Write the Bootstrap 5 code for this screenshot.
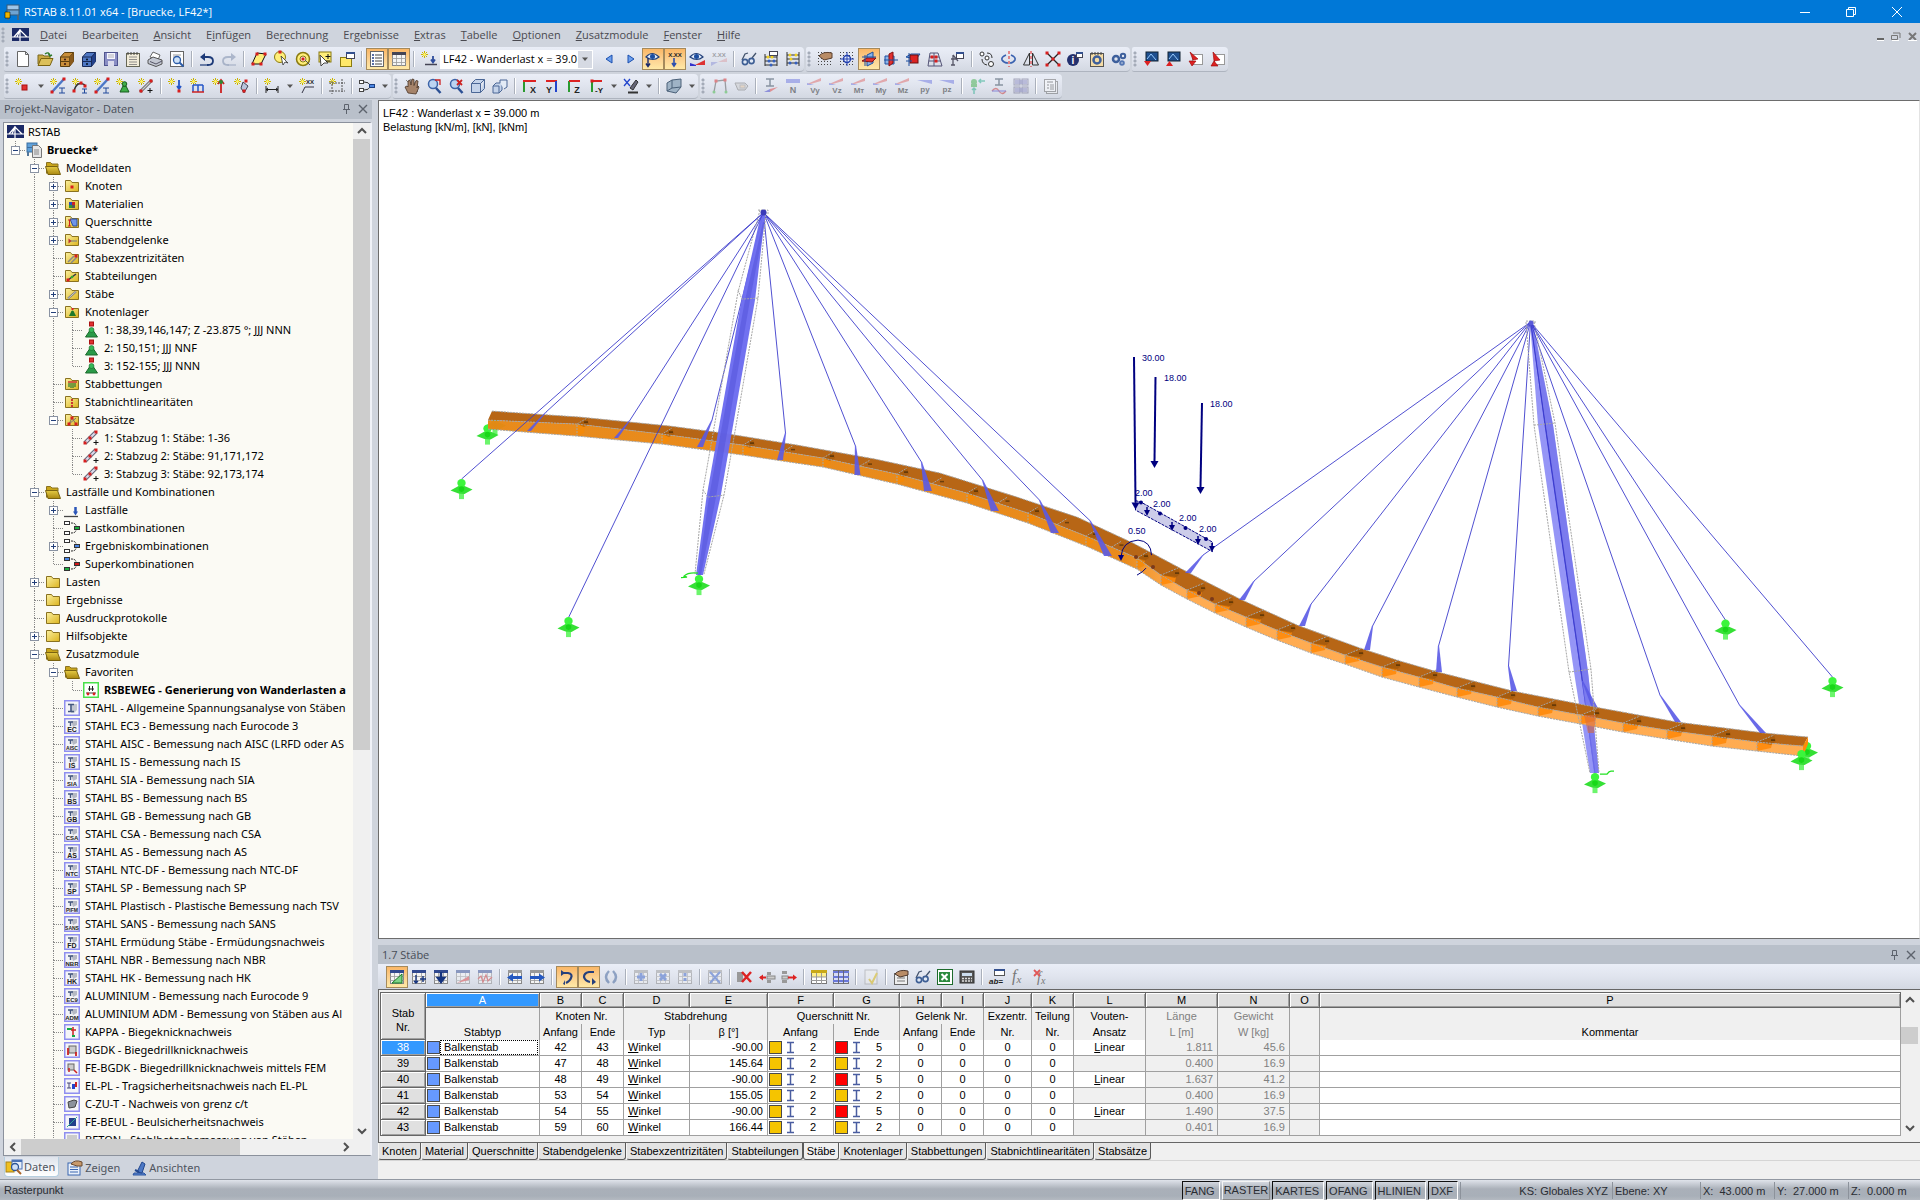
<!DOCTYPE html>
<html lang="de">
<head>
<meta charset="utf-8">
<meta name="viewport" content="width=device-width, initial-scale=1">
<title>RSTAB 8.11.01 x64 - [Bruecke, LF42*]</title>
<link href="https://cdn.jsdelivr.net/npm/bootstrap@5.3.0/dist/css/bootstrap.min.css" rel="stylesheet">
<style>
:root{--ui:"Open Sans","Noto Sans",sans-serif;--nav:"Noto Sans","Open Sans",sans-serif;--grid:"Liberation Sans",Arial,sans-serif;--chrome:#cfd4dd;--head:#b9c0ca}
body{font-family:var(--ui);font-size:11px;line-height:16px;color:#000;background:var(--chrome)}
button,select{font:inherit;color:inherit}
button{border:0;background:none;padding:0}
a{color:inherit;text-decoration:none}
.icn{display:block;width:16px;height:16px;flex:none;overflow:visible}
.title-row{height:23px;background:#0078d7;color:#fff}
.win-btn{width:46px;height:23px;display:flex;align-items:center;justify-content:center}
.menu-row{height:24px;color:#4a4a50}
.menu-row .menu-list{gap:15px}
.mdi-btn{width:16px;height:16px}
.tool-row{height:26px;gap:2px}
.tool-row + .tool-row{margin-top:1px}
.tool-group{height:25px;display:flex;align-items:center;background:linear-gradient(#eaeef7,#e0e4ee 50%,#d3d8e2);border-bottom:1px solid #aeb4bf;border-radius:2px 4px 4px 2px}
.tool-grip{width:8px;height:16px;background:radial-gradient(circle at 3px 2px,#a4abb8 1px,transparent 2px) 0 0/8px 4px}
.tool-sep{width:8px;height:16px;background:linear-gradient(90deg,transparent 3px,#aab0bb 3px,#aab0bb 4px,#fff 4px,#fff 5px,transparent 5px)}
.tool-btn{width:22px;height:22px;display:flex;align-items:center;justify-content:center;border:1px solid transparent}
.tool-btn.active{background:linear-gradient(#fbb765,#fcd08f 50%,#ffe9a6);border-color:#a58a5c}
.tool-btn.wash{opacity:.5}
.tool-caret{width:13px;height:22px;display:flex;align-items:center;justify-content:center}
.case-pick{width:153px;height:19px;margin-right:5px;border:0;background:#fff;padding:0 0 0 3px;font-size:11px;border-radius:0;appearance:none}
.case-box{position:relative}
.case-box .case-arrow{position:absolute;right:6px;top:1px;width:14px;height:17px;background:#d6dae3;pointer-events:none;display:flex;align-items:center;justify-content:center}
.work-area{gap:6px;min-height:0}
.nav-side{width:372px}
.pane-head{height:19px;background:var(--head);color:#474d57;padding:0 1px 0 4px}
.pane-icn{width:16px;height:16px;display:flex;align-items:center;justify-content:center}
.tree-frame{margin:3px 0 0 3px;border:1px solid #8b919c;border-right:2px solid #f0f2f8;min-height:0;background:#fbfaf4}
.tree-box{overflow:hidden;min-width:0;margin:0;padding:0 0 0 2px;list-style:none;font-family:var(--nav)}
.tree-row{display:flex;align-items:center;height:18px;white-space:nowrap}
.tree-cell{width:19px;height:18px;flex:none;position:relative}
.tree-cell .icn{position:absolute;inset:0;width:19px;height:18px}
.tree-icn{margin:0 5px 0 1px}
.vbar{width:17px;background:#f0f0f0;flex:none;display:flex;flex-direction:column;align-items:center}
.vbar .bar-end,.hbar .bar-end{width:17px;height:16px;display:flex;align-items:center;justify-content:center;flex:none}
.bar-thumb{background:#cdcdcd}
.hbar{height:17px;background:#f0f0f0;display:flex}
.side-tabs{height:23px;color:#50555f;gap:7px;padding:1px 0 0 4px;font-family:var(--nav)}
.side-tab{height:20px;gap:2px;padding:1px 3px 0 1px}
.side-tab.active{background:linear-gradient(#dfe4ec,#fff);border:1px solid #b6cfe0;border-top:0;border-radius:0 0 4px 4px}
.view-pane{background:#fff;border:1px solid #6d6d6d;border-right-color:#e3e3e3;min-height:0;position:relative}
.view-pane svg.scene{display:block;width:100%;height:100%}
.view-note{position:absolute;left:4px;top:5px;font:11px/14px var(--grid)}
.scene text{font:9px "Liberation Sans",sans-serif;fill:#000080}
.dock{margin-top:6px}
.dock .tool-group{border-radius:0;border:0;padding-left:8px}
.grid-frame{border:1px solid #666;border-right:0;background:#f0f0f0;padding:2px 2px 6px 1px}
.grid-tbl{table-layout:fixed;border-collapse:separate;border-spacing:0;width:100%;font:11px/15px var(--grid);border-top:1px solid #666;border-left:1px solid #666}
.grid-tbl th,.grid-tbl td{height:16px;padding:0 4px;border:0 solid #a0a0a0;border-width:0 1px 1px 0;white-space:nowrap;overflow:hidden;font-weight:400;text-align:center}
.grid-tbl td{background:#fff}
.grid-tbl thead th{background:#f0f0f0;padding:0 0 1px;border-bottom:0;line-height:14px}
.grid-tbl thead tr:last-child th{border-bottom-width:1px}
.grid-tbl thead th.ltr,.grid-tbl th.rowno,.grid-tbl thead th.corner{background:#e0e0e0;border:0 solid #666;border-width:0 1px 1px 0;box-shadow:inset 1px 1px #fff,inset -1px -1px #a0a0a0;height:15px;line-height:13px;padding:0}
.grid-tbl thead th.corner{line-height:14px;padding-top:8px}
.grid-tbl th.rowno{height:16px}
.grid-tbl thead th.ltr.cur,.grid-tbl th.rowno.cur{background:#3399ff;color:#fff}
.grid-tbl td.calc,.grid-tbl th.calc{background:#f0f0f0;color:#808080}
.grid-tbl td.num{text-align:right}
.grid-tbl td.txt{text-align:left}
.grid-tbl td.swc{padding:0 1px}
.swatch{width:13px;height:13px;border:1px solid #4a4a4a;flex:none}
.focus-cell{border:1px dotted #000;height:15px;line-height:13px;flex:1 1 auto;padding-left:3px}
.bal{height:15px;padding-left:4px}
.dock-tabs{height:18px;background:#f0f0f0;border-bottom:1px solid #d5d5d5}
.dock-tab{height:17px;padding:0 3px;background:#e3e3e3;border:1px solid #5a5a5a;border-top:0;border-left-color:#f5f5f5;border-radius:0 0 3px 3px;font:11px/15px var(--grid)}
.dock-tab.active{background:#f0f0f0;border-left-color:#5a5a5a}
.dock-foot{height:18px;background:#f0f0f0}
.status-row{height:21px;background:linear-gradient(#dfe3ea,#aab0b9 45%,#a8afb8 80%,#b4b9c1);border-top:1px solid #9298a2;font:11px/18px var(--grid);color:#2a2d33}
.snap-btn{height:19px;padding:0 4px 0 2px;margin-right:2px;border:1px solid #111;border-right-color:#fff;border-bottom-color:#fff}
.snap-btn.up{border-color:#f4f4f4 #888 #888 #f4f4f4;line-height:15px;padding:0 1px}
.stat-cell{border-left:1px solid #8c929b;height:17px;padding-left:2px;white-space:pre}
</style>
</head>
<body>
<div class="vh-100 d-flex flex-column overflow-hidden">
  <header>
    <div class="title-row d-flex align-items-center ps-1">
      <span data-icn="app"></span><span class="ms-1 flex-grow-1">RSTAB 8.11.01 x64 - [Bruecke, LF42*]</span>
      <button class="win-btn" aria-label="Minimieren"><svg width="10" height="10"><path d="M0 5.5h10" stroke="#fff"/></svg></button>
      <button class="win-btn" aria-label="Wiederherstellen"><svg width="10" height="10" fill="none" stroke="#fff"><path d="M.5 2.5h7v7h-7zM2.500 2.500v-2h7v7h-2"/></svg></button>
      <button class="win-btn" aria-label="Schließen"><svg width="10" height="10"><path d="M0 0l10 10M10 0L0 10" stroke="#fff"/></svg></button>
    </div>
    <nav class="menu-row d-flex align-items-center" aria-label="Hauptmenü">
      <span class="tool-grip"></span><span data-icn="logo" class="ms-1 me-2"></span>
      <div class="menu-list d-flex flex-grow-1 ps-1">
        <a href="#"><u>D</u>atei</a><a href="#">Bearbeite<u>n</u></a><a href="#"><u>A</u>nsicht</a><a href="#">E<u>i</u>nfügen</a><a href="#">Be<u>r</u>echnung</a><a href="#">Er<u>g</u>ebnisse</a><a href="#"><u>E</u>xtras</a><a href="#"><u>T</u>abelle</a><a href="#"><u>O</u>ptionen</a><a href="#"><u>Z</u>usatzmodule</a><a href="#"><u>F</u>enster</a><a href="#"><u>H</u>ilfe</a>
      </div>
      <button class="mdi-btn" aria-label="Fenster minimieren"><svg width="9" height="9"><path d="M1 7h7" stroke="#666" stroke-width="2"/><path d="M1 8.500h7" stroke="#fff"/></svg></button>
      <button class="mdi-btn" aria-label="Fenster wiederherstellen"><svg width="10" height="9" fill="none" stroke="#777"><path d="M.5 3.500h6v4h-6zM2 1h7v5" /><path d="M1 8.500h7" stroke="#fff"/></svg></button>
      <button class="mdi-btn" aria-label="Fenster schließen"><svg width="9" height="9"><path d="M1 1l7 7M8 1L1 8" stroke="#777" stroke-width="2"/><path d="M0 8.500h9" stroke="#fff"/></svg></button>
    </nav>
    <div class="tool-row d-flex ps-1" id="bar1"></div>
    <div class="tool-row d-flex ps-1" id="bar2"></div>
  </header>

  <main class="work-area d-flex flex-grow-1">
    <aside class="nav-side d-flex flex-column flex-shrink-0">
      <div class="pane-head d-flex align-items-center">
        <span class="flex-grow-1">Projekt-Navigator - Daten</span>
        <button class="pane-icn" data-icn="pin" aria-label="Anheften"></button><button class="pane-icn" data-icn="close" aria-label="Navigator schließen"></button>
      </div>
      <div class="tree-frame d-flex flex-column flex-grow-1">
        <div class="d-flex flex-grow-1 overflow-hidden">
          <ul class="tree-box flex-grow-1" id="tree"></ul>
          <div class="vbar">
            <span class="bar-end" data-icn="up"></span>
            <span class="bar-thumb w-100" style="flex:609 0 0"></span><span style="flex:371 0 0"></span>
            <span class="bar-end" data-icn="down"></span>
          </div>
        </div>
        <div class="hbar pe-3">
          <span class="bar-end" data-icn="left"></span>
          <span class="bar-thumb" style="flex:218 0 0"></span><span style="flex:96 0 0"></span>
          <span class="bar-end" data-icn="right"></span>
        </div>
      </div>
      <div class="side-tabs d-flex">
        <button class="side-tab active d-flex align-items-center"><span data-icn="tabdata"></span>Daten</button>
        <button class="side-tab d-flex align-items-center"><span data-icn="tabshow"></span>Zeigen</button>
        <button class="side-tab d-flex align-items-center"><span data-icn="tabview"></span>Ansichten</button>
      </div>
    </aside>

    <section class="d-flex flex-column flex-grow-1 overflow-hidden">
      <div class="view-pane flex-grow-1">
        <svg class="scene" id="scene" viewBox="379 101 1540 837" preserveAspectRatio="xMidYMid meet"></svg>
        <div class="view-note">LF42 : Wanderlast x = 39.000 m<br>Belastung [kN/m], [kN], [kNm]</div>
      </div>
      <div class="dock">
        <div class="pane-head d-flex align-items-center">
          <span class="flex-grow-1">1.7 Stäbe</span>
          <button class="pane-icn" data-icn="pin" aria-label="Tabelle anheften"></button><button class="pane-icn" data-icn="close" aria-label="Tabelle schließen"></button>
        </div>
        <div id="bar3"></div>
        <div class="grid-frame d-flex">
          <table class="grid-tbl flex-grow-1">
            <colgroup id="gridcols"></colgroup>
            <thead>
              <tr id="letters"></tr>
              <tr><th></th><th colspan="2">Knoten Nr.</th><th colspan="2">Stabdrehung</th><th colspan="2">Querschnitt Nr.</th><th colspan="2">Gelenk Nr.</th><th>Exzentr.</th><th>Teilung</th><th>Vouten-</th><th class="calc">Länge</th><th class="calc">Gewicht</th><th></th><th></th></tr>
              <tr><th>Stabtyp</th><th>Anfang</th><th>Ende</th><th>Typ</th><th>β [°]</th><th>Anfang</th><th>Ende</th><th>Anfang</th><th>Ende</th><th>Nr.</th><th>Nr.</th><th>Ansatz</th><th class="calc">L [m]</th><th class="calc">W [kg]</th><th></th><th>Kommentar</th></tr>
            </thead>
            <tbody id="rows"></tbody>
          </table>
          <div class="vbar">
            <span class="bar-end" data-icn="up"></span><span style="flex:18 0 0"></span>
            <span class="bar-thumb w-100" style="flex:17 0 0"></span><span style="flex:74 0 0"></span>
            <span class="bar-end" data-icn="down"></span>
          </div>
        </div>
        <div class="dock-tabs d-flex">
          <button class="dock-tab">Knoten</button><button class="dock-tab">Material</button><button class="dock-tab">Querschnitte</button><button class="dock-tab">Stabendgelenke</button><button class="dock-tab">Stabexzentrizitäten</button><button class="dock-tab">Stabteilungen</button><button class="dock-tab active">Stäbe</button><button class="dock-tab">Knotenlager</button><button class="dock-tab">Stabbettungen</button><button class="dock-tab">Stabnichtlinearitäten</button><button class="dock-tab">Stabsätze</button>
        </div>
        <div class="dock-foot"></div>
      </div>
    </section>
  </main>

  <footer class="status-row d-flex align-items-center ps-1">
    <span class="flex-grow-1">Rasterpunkt</span>
    <button class="snap-btn">FANG</button><button class="snap-btn up">RASTER</button><button class="snap-btn">KARTES</button><button class="snap-btn">OFANG</button><button class="snap-btn">HLINIEN</button><button class="snap-btn">DXF</button>
    <span class="stat-cell text-end pe-1" style="width:152px">KS: Globales XYZ</span>
    <span class="stat-cell" style="width:88px">Ebene: XY</span>
    <span class="stat-cell" style="width:74px">X:  43.000 m</span>
    <span class="stat-cell" style="width:74px">Y:  27.000 m</span>
    <span class="stat-cell" style="width:72px">Z:  0.000 m</span>
  </footer>
</div>

<script src="https://cdn.jsdelivr.net/npm/bootstrap@5.3.0/dist/js/bootstrap.bundle.min.js"></script>
<script>
/* ---------- small drawing helpers ---------- */
const R=(x,y,w,h,f='none',s='none')=>`<rect x="${x}" y="${y}" width="${w}" height="${h}" fill="${f}" stroke="${s}"/>`;
const P=(d,s='#222',w=1,f='none',x='')=>`<path d="${d}" stroke="${s}" stroke-width="${w}" fill="${f}" ${x}/>`;
const C=(x,y,r,f='none',s='none',w=1)=>`<circle cx="${x}" cy="${y}" r="${r}" fill="${f}" stroke="${s}" stroke-width="${w}"/>`;
const T=(x,y,t,z=7,f='#222',x2='')=>`<text x="${x}" y="${y}" font-size="${z}" fill="${f}" font-family="Liberation Sans" font-weight="bold" text-anchor="middle" ${x2}>${t}</text>`;
const star=P('M3.500 0v7M0 3.500h7M1 1l5 5M6 1l-5 5','#c9b400',1)+C(3.5,3.5,1.5,'#fff36b');
const node=(x,y)=>R(x-1.5,y-1.5,3,3,'#d81e1e');
const page=R(1.5,.5,13,15,'#fdfdfd','#666');
const lens=C(7,6,4.5,'#bcd4f2','#3c63a8',1.5)+P('M10 10l4.500 5','#2b4f94',2.5);
const dots=(()=>{let o='';for(let y=1;y<16;y+=3)for(let x=1;x<16;x+=3)o+=R(x,y,1,1,'#444');return o})();
const eye=P('M1 6q6-7 13 0q-6 5-13 0z','#23407a',1.2,'#dfeafa')+C(7.5,5.500,2.500,'#1c4da0');
const glasses=P('M1 9L4 3l3-1M11 7l4-5','#44546e',1.3)+C(4,11,2.6,'#dfe8f5','#3d5e94',1.6)+C(10.500,10,2.6,'#dfe8f5','#3d5e94',1.6);
const tbl=(c='#31498f')=>R(1.5,1.5,13,13,'#f4f4f4','#888')+R(1,1,14,3,c)+P('M5.500 4v11M10.500 4v11M1 7.500h14M1 11.500h14','#999',.8);
const cube=(f='#c4d3ea')=>P('M1.500 5.500h9v9h-9zM1.500 5.500l4-4h9l-4 4M14.500 1.500v9l-4 4','#4b6796',1,f);
const folderC=(g='')=>P('M1.500 13.500v-11h5l1.500 2h6.500v9z','#8a7220',1,'url(#gy)')+g;
const folderO=P('M1.500 13.500v-11h4l1.500 1.500h6v3','#8a7220',1,'#c9a51a')+P('M3 14.500L.5 6.500h12l3 8z','#7a6310',1,'url(#gy2)');
const I={
app:R(3,1,12,5,'#9fc6e8','#3a5b78')+R(3,6,12,5,'#6fa4d2','#3a5b78')+P('M4 11v5M14 11v5','#49697f',2)+P('M1 8h5v6h-5z','#000',.5,'#f0b400'),
logo:R(0,1,17,13,'#1c2a66')+P('M0 10h17M5 10L8 3l7 7M8 2v12M8 3L2 10','#fff',1.2),
pin:P('M5.500 3.500h4v5h-4zM4 8.500h7M7.500 9v4','#5d636d',1),
close:P('M4 4l8 8M12 4l-8 8','#5d636d',1.4),
up:P('M4 10l4-4 4 4','#505050',2),down:P('M4 6l4 4 4-4','#505050',2),left:P('M10 4L6 8l4 4','#505050',2),right:P('M6 4l4 4-4 4','#505050',2),
tabdata:R(0,3,8,10,'#f0c020','#a5811a')+R(6,1,10,9,'#e6eef8','#4b73b5')+R(6,1,10,2,'#4b73b5')+C(9,8,3.5,'#cfe0f5','#2c5596',1.3)+P('M11 11l4 4','#a8642a',2),
tabshow:R(1,3,12,12,'#e9f0fa','#3a66b0')+P('M3 7h8M3 9.500h8M3 12h8','#3a66b0')+P('M4 4q4-5 11-2v4h-5z','#6b4a30',1,'#c89a6c'),
tabview:P('M3 13h10l2 2H2z','#2a54a0',1,'#5c86cf')+P('M6 12L11 2l3 2-3 9z','#22478e',1,'#4d78c4')+P('M4 10l4 2','#22478e',2),
new:P('M2.500.5h8l3 3v12h-11zM10.500.5v3h3','#666',1,'#fff'),
open:P('M1 13V4h5l1 1h6v3','#7a6820',1,'#c9a842')+P('M1 14.500l3-7h12l-3 7z','#7a6310',1,'#dcc05a')+P('M8 3q4-3 5 2l2-1M13 5l-1.500-2','#2c7a2c',1.4),
cab1:P('M1.500 6l4-4.500h9v9l-4 5h-9z','#5a3e10',1,'#c98e3a')+P('M1.500 6h9v9.500M10.500 6l4-4.500M1.500 10.500h9','#5a3e10')+P('M10.500 6l4-4.500v9l-4 5z','none',0,'#8a5a1c')+C(6,8.500,1,'#311')+C(6,13,1,'#311'),
cab2:P('M1.500 6l4-4.500h9v9l-4 5h-9z','#182a58',1,'#4f78c4')+P('M10.500 6l4-4.500v9l-4 5z','none',0,'#23408a')+P('M1.500 6h9v9.500M10.500 6l4-4.500M1.500 10.500h9','#182a58')+C(6,8.500,1,'#012')+C(6,13,1,'#012'),
save:R(1.500,1.500,13,13,'#8a8ec4','#50548f')+R(4,2,8,6,'#f5f5ff')+R(5,10,6,5,'#dcdcec')+P('M5 4h6M5 6h6','#999',.7),
clip:R(1.500,2.500,13,13,'#f2ecd9','#665')+P('M4 6h8M4 8.500h8M4 11h8M4 13.500h8','#777',.8)+P('M3 1v3M6 1v3M9 1v3M12 1v3','#444'),
print:P('M3 6L6 1l7 3-2 5z','#666',1,'#fff')+P('M1 9l5-3 9 3v4l-6 2.500-8-3z','#555',1,'#c3c7d2')+P('M3 10.500l6 2.500 6-3','#556'),
prev:page+P('M4 4h8M4 6h6','#999')+C(8,9,3.500,'#cfe2f7','#2c5ca8',1.3)+P('M10.500 11.500l4 4','#2c5ca8',2),
undo:P('M3 6h6q5 0 5 4t-5 4H8','#1d3a78',1.8)+P('M1 6l5-4v8z','none',0,'#1d3a78')+P('M1 14h7','#1d3a78',1.2),
redo:P('M13 6H7q-5 0-5 4t5 4h1','#7788a8',1.8)+P('M15 6l-5-4v8z','none',0,'#7788a8')+P('M8 14h7','#7788a8',1.2),
selpoly:P('M1 13L6 2l9 1-5 10z','#111',1,'#ffef7a')+node(2,13)+node(6,3)+node(14,3)+node(10,13),
sel1:C(7,6,5.500,'#ffef7a','#8a7a10')+P('M8 5l2 9 2-3 3 1z','#333',.8,'#fff')+node(7,1),
sel2:C(8,8,6.5,'#ffef7a','#8a7a10',1.5)+C(8,8,3,'#fff','#8a7a10')+node(8,8)+P('M10 9l5 5','#555'),
sel3:R(2,1,12,10,'#ffef7a','#8a7a10')+P('M3 4l8 8h-4l-3 3z','#444',1,'#fff')+P('M11 3v5M8.500 5.500h5M9 10h4','#111'),
sel4:R(1.500,6.500,11,9,'#ffe96a','#8a7a10')+R(7.500,1.500,8,6,'#fff','#445')+R(7,1,9,2,'#33508f'),
nav:page+P('M3 4h2M3 7h2M3 10h2M3 13h2','#223f8a',1.6)+P('M6 4h7M6 7h7M6 10h7M6 13h7','#444'),
tab:tbl('#445'),
loadnew:star+P('M12 5v6M10 8.500l2 3 2-3','#2d4c9c',1.8)+P('M4 13.500h12','#445',1.5),
pl:P('M11 4L5 8l6 4z','#1a4fae',1,'#6ea0ee'),pr:P('M5 4l6 4-6 4z','#1a4fae',1,'#6ea0ee'),
eyeload:eye+P('M3 7v8M1 12.500l2 3 2-3','#1b2a6b',1.4),
xload:T(8,6,'X.XX',6)+P('M7 7v8M5 12l2 3 2-3','#2c4fb0',1.6),
eyeres:eye+P('M6 14l10-5v5z','none',0,'#d33')+P('M1 12l6 2v1H1z','none',0,'#33c'),
xres:T(8,6,'X.XX',6,'#555')+P('M7 11l9-4v4z','none',0,'#dba0a6')+P('M0 11h7l-7 4z','none',0,'#8c92d8'),
glasses,
calc:P('M2 3v12M14 3v12M2 6h12M2 10h12M2 14h12','#333')+C(5,6,1.5,'#f0d020')+C(9,6,1.5,'#f0d020')+C(6,10,1.5,'#3560c0')+C(11,10,1.5,'#3560c0')+C(8,14,1.5,'#3560c0')+R(6.500,.5,8,4,'#fff','#445'),
calc2:P('M2 1v14M14 1v14M2 4h12M2 8h12M2 12h12','#333')+C(5,4,1.5,'#f0d020')+C(11,4,1.5,'#f0d020')+C(6,8,1.5,'#f0d020')+C(11,12,1.5,'#3560c0')+C(5,12,1.5,'#3560c0'),
griddots:dots+P('M2 5q4-5 13-3v5l-8 2z','#5a4030',1,'#b98c66'),
gridsnap:dots+C(8,8,3.500,'#e8eefc','#2240b0',1.4)+P('M8 1v14M1 8h14','#2240b0'),
pln1:P('M6 4l6-3v11l-6 3z','#1c4ea0',1,'#8ab4e8')+P('M1 10l5-3h9l-4 4z','#811',1,'#e23030')+P('M4 4v11M1 6h14','#1c4ea0'),
pln2:P('M2 5h9v8H2z','#1c4ea0',1,'#8ab4e8')+P('M6 3l4-2v11l-4 3z','#811',1,'#e23030')+P('M1 9h14','#1c4ea0'),
pln3:P('M1 6l5-3h9l-4 5z','#1c4ea0',1,'#8ab4e8')+R(5,4,8,8,'#d22','#611')+P('M4 2v13M1 10h6','#1c4ea0'),
mesh:P('M3 2h8l4 13H1zM7 2v13M2 6h10M1.500 10h12','#557')+node(5,6)+node(9,10)+node(9,6),
snapset:P('M2 14h4M4 14V4M4 4l5 6M2 8h6','#556',1.3)+R(7.500,1.500,7,6,'#fff','#445')+R(7,1,8,2,'#33508f'),
copy:C(3,3,2,'#fff','#333')+C(8,7,2,'#fff','#333')+C(12,13,2.500,'#fff','#333')+P('M8 2q5 0 5 5M3 8q0 5 5 6','#333'),
rot:P('M5 4q-5 2-4 5 2 3 6 3M10 4q5 2 4 5-2 3-5 3','#3a62b0',1.6)+P('M8 0v16','#d22',1,'none','stroke-dasharray="3 2"'),
mirror:P('M6.500 2v12H.5zM9.500 2v12h6z','#333')+P('M8 0v16','#d22',1,'none','stroke-dasharray="3 2"'),
cross:P('M2 2l12 12M14 2L2 14','#222',1.3)+node(2,2)+node(14,2)+node(2,14)+node(14,14)+node(8,8),
info:C(6,9,6,'#23306e')+T(6,13,'i',10,'#fff')+R(9.500,1.500,6,5,'#fff','#445')+R(9,1,7,2,'#33508f'),
gearpage:R(1.500,2.500,13,13,'#f5dca6','#555')+C(8,9,3.500,'none','#3d5f9c',2.500)+P('M3 1v3M6 1v3M9 1v3M12 1v3','#444'),
gears:C(5,8,3,'none','#3d5f9c',2.500)+C(12,5,2.200,'none','#3d5f9c',2)+C(11,12,1.800,'none','#5577b4',2),
mod1:R(3,1,12,9,'#1e4f8f','#123')+P('M4 8l4-5 5 6','#9cf')+P('M1 10h7l-3.500 5z','none',0,'#d22'),
mod2:R(3,1,12,9,'#1e4f8f','#123')+P('M4 8l4-5 5 6','#9cf')+P('M1 15h7l-3.500-5z','none',0,'#d22'),
mod3:R(5.500,3.500,10,10,'#fff','#999')+P('M3 1l8 7-5 1zM2 10h7l-4 5z','#900',.6,'#d22'),
mod4:R(5.500,3.500,10,10,'#fff','#999')+P('M4 1l7 8-6 1zM2 15h7l-4-5z','#900',.6,'#d22'),
nnode:star+R(7,7,5,5,'#e03030','#a11'),
nmem:star+P('M2 14L14 1','#4c78c8',2.500)+node(2,14)+node(14,1)+P('M9 10h6M12 10v5M9 15h6','#224a9c'),
nset:star+P('M2 13Q5 2 13 7','#333',1.5)+node(2,13)+node(9,5)+node(13,8)+P('M10 11h5M12.500 11v4M10 15h5','#224a9c'),
nsup:star+P('M4 14l3-6h3l3 6z','#175c1e',1,'#3fae49')+C(8.500,6,2.300,'#3fae49','#175c1e'),
ndiv:star+P('M2 14L14 2','#555',3)+P('M2 14L14 2','#ccc',1.500)+node(3,13)+node(13,3)+P('M12 10v5M9.500 12.500h5','#111'),
nld1:star+P('M11 2v8M9 8l2 3 2-3','#2456c8',1.800)+node(11,13),
nld2:star+P('M3 7v7M8 7v7M13 7v7M3 7h10','#2456c8',1.5)+P('M2 14h12','#c22',1.500),
nld3:star+P('M9 3v12M6 6l3-4 3 4','#c22',1.800)+C(9,4,2,'#2c8c36'),
nld4:star+P('M9 4l5 4-4 7-3-5z','#445',1,'#b9c4dc')+node(12,3)+node(10,13),
dim:star+P('M2 8v7M14 8v7M2 11.500h12M4 10l-2 1.500 2 1.500M12 10l2 1.500-2 1.500','#222'),
xx:star+T(11,6,'XX',6)+P('M3 15l3-6h9','#334'),
grd:star+P('M3 3v13M13 1v13M0 5h16M0 13h16','#555',1,'none','stroke-dasharray="2 1"'),
comb:R(.5,2.500,4,3,'#fff','#444')+R(.5,10.500,4,3,'#fff','#444')+P('M5 4q5 0 6 3M5 12q5 0 6-3','#333')+R(10.500,6.500,5,3,'#4a86e4','#1c3f80'),
hand:P('M2 2l12 12M6 1l9 8','#888',1)+P('M4 15l-3-6 2-1 1 1V3l2-1 1 5 1-6 2 .5 0 6 2-5 2 .5-1 7 1-2 1 1-3 7z','#4a3526',.8,'#a5836a'),
zoom1:lens+P('M9 2h5v5','#c22',1.300),zoom2:lens+P('M9 2l5 5M14 2L9 7','#c22',1.800),
cube:cube(),box:P('M1 8h6v7H1zM1 8l3-3h6v7l-3 3','#4b6796',1,'#c4d3ea')+P('M8 5V2h7v7l-3 2','#4b6796',1,'#e3ebf6'),
ax:T(11,15,'X',9)+P('M2 3v11','#2a9a30',2)+P('M1 3h13','#d22',2),ay:T(5,15,'Y',9)+P('M2 3h11','#d22',2)+P('M12 3v11','#24c',2),az:T(11,15,'Z',9)+P('M3 3v11','#2a9a30',2)+P('M3 3h11','#d22',2),amy:T(11,15,'-Y',8)+P('M4 3v11','#2a9a30',2)+P('M4 3h10','#d22',2)+node(4,3),
scope:P('M1 1l6 7M7 1L1 8','#24c',1.300)+P('M5 14.500h10','#333',2)+P('M7 10L13 2l2 2-5 8z','#333',1,'#667'),
solid:P('M1 5l5-3 9-1v8l-5 6-9-2z','#4a6078',1,'#9fb3c6')+P('M6 2v8l9-1M6 10l-5 3','#4a6078'),
frame:P('M3 14L5 3l9-1 1 11','#555',1.300)+node(5,3)+node(14,2)+C(3,14,1.500,'#4b4')+C(15,14,1.5,'#4b4'),
roll:P('M2 5h10l3 3-3 4H5z','#777',1,'#ccc')+R(7,7,5,3,'#e8c8a0','#999'),
bI:P('M3 1h8M7 1v7M3 8h8','#345',1.500)+P('M1 14l6-3v3z','none',0,'#44c')+P('M7 11l8-2-8 5z','none',0,'#d44'),
bN:R(1,1,14,4,'#6d76e0')+T(8,15,'N',9),
bVy:wedgeUp('Vy'),bVz:wedgeUp('Vz'),bMT:wedgeUp('Mт'),bMy:wedgeUp('My'),bMz:wedgeUp('Mz'),bpy:P('M0 2h15v4z','none',0,'#6d76e0')+T(8,14,'py',8),bpz:P('M0 2h15v4z','none',0,'#6d76e0')+T(8,14,'pz',8),
tree3:C(5,4,3,'#3fae49')+R(2,6,6,3,'#3fae49')+P('M10 3h6M12 1l-2 2 2 2M5 16v-5M3 12l2-2 2 2','#2a8',1.500),
isec:P('M4 1h8M8 1v6M4 7h8','#345',1.500)+P('M1 13q4-5 7 0t7 0','#c33',1.300)+P('M1 13h14','#33c'),
tbl4:R(1,1,6,6,'#ccd','#668')+R(9,1,6,6,'#ccd','#668')+R(1,9,6,6,'#ccd','#668')+R(9,9,6,6,'#ccd','#668')+P('M2 3h12M2 5h12M2 11h12M2 13h12','#55a'),
rep:R(3.500,3.500,11,12,'#f4f4f4','#666')+R(1.500,1.500,11,12,'#fff','#666')+P('M4 4h6M4 7h2M4 10h2','#444')+R(7,6,4,6,'#aaa'),
tg1:tbl()+P('M3 14L13 5v9z','#1a7a24',1,'#7fd488'),tg2:tbl()+P('M5 6v8M3 12l2 2 2-2M12 7v6M9 10h6','#15337e',1.400),tg3:tbl()+P('M8 3v8M5 9l3 4 3-4z','#15337e',2.500),
tg4:tbl()+P('M2 14l12-7v4z','none',0,'#d44'),tg5:tbl()+P('M1 10l3-3 2 6 3-7 2 6 4-4','#c33',1.200),
tp1:tbl('#999')+P('M3 8.500h12','#2458c0',3)+P('M0 8.500l6-4v8z','none',0,'#2458c0'),tp2:tbl('#999')+P('M1 8.500h12','#2458c0',3)+P('M16 8.500l-6-4v8z','none',0,'#2458c0'),
cw1:P('M3 4h6q5 1 3 5-1 3-5 5','#26407c',2.2)+P('M2 1v6l4-3zM6 11v5l-2-1z','none',0,'#26407c'),cw2:P('M13 3H8q-5 1-5 5 1 4 6 5','#26407c',2.2)+P('M11 9v7l4-3z','none',0,'#26407c'),cw3:P('M6 2q-6 6 0 12M10 14q6-6 0-12','#3d6098',2.400),
ta:tbl('#999')+P('M8 4v8M4 8h8','#3a63c8',3),tb:tbl('#999')+P('M5 5l6 6M11 5l-6 6','#3a63c8',3),tc:tbl('#999')+P('M8 4v3M8 9v3','#3a63c8',3),td:tbl('#999')+P('M3 3l10 11M13 3L3 14','#3a63c8',2),
te:R(0,3,6,10,'#999')+P('M5 3l9 10M14 3L5 13','#d22',2.500),tf:R(8,3,4,3,'#999')+R(8,11,4,3,'#999')+R(8,7,8,3,'#ccc','#888')+P('M7 8.500H1','#d22',2)+P('M0 8.500l4-3v6z','none',0,'#d22'),tgx:R(1,2,5,3,'#999')+R(1,11,5,3,'#999')+R(1,7,6,3,'#ccc','#888')+P('M7 8.500h7','#d22',2)+P('M16 8.500l-4-3v6z','none',0,'#d22'),
th:R(.5,1.500,15,13,'#fff','#777')+R(1,4,14,4,'#fff08a')+R(0,1,16,3,'#c8a818')+P('M5.500 4v11M10.500 4v11M0 8h16M0 11.500h16','#999'),ti:R(.5,1.500,15,13,'#d5dbf8','#777')+P('M0 3h16M0 8h16M0 12h16','#6a78d8',2)+P('M5.500 1v14M10.500 1v14','#667'),
tj:R(2,1,12,14,'#eee','#999')+P('M6 10l3 4L14 4','#d8b400',2),tk:R(1.500,4.500,13,11,'#eee','#666')+P('M4 9h8M4 12h8','#777')+P('M2 5q4-5 13-3v4l-8 2z','#4b352a',1,'#b98c66'),
xls:R(.5,.5,15,15,'#fff','#1d6b2c')+R(2,3,11,10,'#2b8a3e')+P('M4.500 5l6 6M10.500 5l-6 6','#fff',2),kalk:R(1,2,14,12,'#555','#333')+R(3,4,10,3,'#cde')+P('M3 9.500h10M3 12h10','#ddd',1.600,'none','stroke-dasharray="2 1"'),
ab:R(5.500,.5,10,6,'#fff','#555')+R(5,0,11,2,'#33508f')+T(7,15,'ab=',8,'#222','font-style="italic"'),
fx:`<text x="1" y="12" font-family="Liberation Serif" font-style="italic" font-size="16" fill="#777">f<tspan font-size="11" dy="2">x</tspan></text>`,
fxx:`<text x="4" y="13" font-family="Liberation Serif" font-style="italic" font-size="14" fill="#777">f<tspan font-size="10" dy="2">x</tspan></text>`+P('M1 1l6 6M7 1L1 7','#e05858',1.800),
caret:P('M5 6.500h6l-3 3.500z','none',0,'#555'),
fo:folderO,fc:folderC(),
f1:folderC(node(8,9)),f2:folderC(R(5,6,3,3,'#2a4cc0')+R(8,6,3,3,'#c22')+R(5,9,3,3,'#2a9a30')+R(8,9,3,3,'#555')),
f3:folderC(P('M6 5h7v7H9z','#2c4ea0',1,'#6f95e8')+P('M4 6h3M5.500 6v6M4 12h3','#c22')),f4:folderC(P('M5 9h8','#887',1.300)+P('M4.500 6.500l3 2.500-3 2.500z','none',0,'#b33')),
f5:folderC(P('M4 12l6-6M7 13l6-6','#888',1.500)+node(12,6)),f6:folderC(P('M4 12l8-6','#334',1.500)+C(8,9,1.300,'#3a3')+node(4,12)),f7:folderC(P('M4 12.500l8-7','#777',2)+P('M4 12.500l8-7','#ddd',.8)),
f8:folderC(P('M5 12l2-4h3l2 4z','none',0,'#1f7a2c')+C(8.500,8,1.500,'#1f7a2c')+R(7.500,4,2,2,'#d22')),f9:folderC(P('M4 6h9','#c33',1.500)+P('M5 7v4M7 7v5M9 7v5M11 7v4','#267a30',1.200)),
f10:folderC(P('M8 5v8','#c33',2,'none','stroke-dasharray="2 1"')),f11:folderC(P('M5 12l3-6 4 6','#775')+P('M4 13l8-7','#777')+node(5,12)+node(8,6)+node(12,12)),
sup:P('M2.500 15l4-6h4l4 6z','#1c6a2c',1,'#2a9a48')+C(8.500,8,2.500,'#34b858','#1c6a2c',.6)+R(6.500,0,4,4,'#e03030','#a11'),
zug:P('M2 13L13 2','#667',4)+P('M2 13L13 2','#dde',2)+node(2,13)+node(7,8)+node(13,2)+P('M13 10v5M10.500 12.500h5','#111'),
proj:R(1,1,10,9,'#5fa0d8','#3a6ea0')+P('M1 5.500h10','#3a6ea0')+P('M2 10v4M10 10v4','#579',2)+P('M6.500 3.500h6l3 3v9h-9z','#777',1,'#e6e6e6')+P('M8 8h5M8 10h5M8 12h5','#888'),
lf:P('M0 14.500h14','#444',1.300)+P('M11.500 5v6','#2a55b8',2.500)+P('M9 9.500h5l-2.500 4z','none',0,'#2a55b8'),
c1:comb3('#fff','#fff','#20b040'),c2:comb3('#fff','#fff','#4a86e4'),c3:comb3('#4a86e4','#20b040','#d01818'),
rsb:R(1,1,14,14,'#fff','#4ae04a')+R(.5,.5,15,15,'none','#4ae04a')+P('M6.500 4v5M9.500 4v5M5 7h6','#222')+P('M3 11h10','#444')+C(5,12,1.400,'#d22')+C(11,12,1.400,'#d22')
};
function wedgeUp(t){return P('M0 6L14 0v3L0 7z','none',0,'#e06a6a')+P('M0 5v2h7z','none',0,'#6d76e0')+T(8,15,t,8)}
function comb3(a,b,c){return R(.5,1.500,5,3,a,'#333')+R(.5,11.500,5,3,b,'#333')+P('M7 3q5 0 5 3M7 13q5 0 5-3','#222',1,'none','stroke-dasharray="2 1"')+R(10.500,6.500,5,3,c,'#333')}
function modIcn(t){
  const frame=R(1,1,14,14,'#f4f4f7','#8f8ff0')+R(.5,.5,15,15,'none','#8f8ff0');
  const special={K:P('M3 5h5','#1a4',2)+P('M9 3v9M7 6h5','#c22',1.500)+R(8,11,3,2,'#1a4'),B:R(5,4,7,7,'#ccc','#666')+P('M4 6v7M12 10v4','#c22',1.800),F:R(4,4,6,6,'#ccc','#666')+P('M5 8v4M10 10l3 3','#c22',1.500),E:P('M3 5h4M5 5v5M3 10h4','#447')+R(8,6,3,5,'#24c')+R(11,4,2,5,'#c22'),C:P('M4 6l6-2 3 1-2 6-6 1z','#444',1,'#8c929c'),X:R(5,4,7,8,'#223f8a')+P('M3 13L13 3','#3a9',1),G:R(3,3,10,10,'#ccc')};
  if(special[t])return frame+special[t];
  if(!t)return frame+P('M8 4h5v6l-3 3H7z','none',0,'#c3c7d0')+P('M4 4.500h6M7 4.500v7M4 11.500h6','#44587f',1.600);
  return frame+P('M7 3h6v4l-4 2z','none',0,'#b5b9c4')+P('M4 4h5M6.500 4v4','#44587f',1.400)+T(8,14,t,t.length>3?5:t.length>2?6:7,'#222');
}
const svg=(inner)=>`<svg class="icn" viewBox="0 0 16 16" aria-hidden="true">${inner}</svg>`;
document.body.insertAdjacentHTML('afterbegin','<svg width="0" height="0" class="position-absolute"><defs><linearGradient id="gy" x2="1" y2="1"><stop stop-color="#fbf0a0"/><stop offset="1" stop-color="#dcb41e"/></linearGradient><linearGradient id="gy2" x2="0" y2="1"><stop stop-color="#e6cb45"/><stop offset="1" stop-color="#a98810"/></linearGradient></defs></svg>');
document.querySelectorAll('[data-icn]').forEach(e=>e.innerHTML=svg(I[e.dataset.icn]));

/* ---------- tool bars: * pressed, ~ disabled, | separator, v drop-down arrow ---------- */
function tools(list){
  return list.split(' ').map(k=>{
    if(k==='#')return '<span class="tool-grip"></span>';
    if(k==='|')return '<span class="tool-sep"></span>';
    if(k==='v')return `<button class="tool-caret" aria-label="Mehr">${svg(I.caret)}</button>`;
    if(k==='pick')return '<span class="case-box"><select class="case-pick" aria-label="Lastfall"><option>LF42 - Wanderlast x = 39.0</option></select><span class="case-arrow">'+svg(I.caret)+'</span></span>';
    const c=k[0]==='*'?' active':k[0]==='~'?' wash':'',n=k.replace(/^[*~]/,'');
    return `<button class="tool-btn${c}" aria-label="${n}">${svg(I[n])}</button>`;
  }).join('');
}
const bars={
 bar1:['# new open cab1 cab2 save clip print prev | undo ~redo | selpoly sel1 sel2 sel3 sel4 | *nav *tab | loadnew pick pl pr *eyeload *xload eyeres ~xres | glasses calc calc2','# griddots gridsnap *pln1 pln2 pln3 mesh snapset | copy rot mirror cross info gearpage gears','# mod1 mod2 mod3 mod4'],
 bar2:['# nnode v nmem nset nmem nsup ndiv | nld1 nld2 nld3 nld4 | dim v xx | grd | comb v','# hand zoom1 zoom2 cube box | ax ay az amy v scope v | solid v','# ~frame ~roll | ~bI ~bN ~bVy ~bVz ~bMT ~bMy ~bMz ~bpy ~bpz | ~tree3 ~isec ~tbl4 | ~rep'],
 bar3:['*tg1 tg2 tg3 ~tg4 ~tg5 | tp1 tp2 | *cw1 *cw2 ~cw3 | ~ta ~tb ~tc | ~td | te tf tgx | th ti | ~tj | tk glasses xls kalk | ab fx fxx']
};
for(const id in bars)document.getElementById(id).innerHTML=bars[id].map(b=>`<div class="tool-group" role="toolbar">${tools(b)}</div>`).join('');

/* ---------- project tree: level, expander (+ - .), icon, label ---------- */
const S=(t,l)=>[3,'.','@'+t,l];
const tree=[[0,'','logo','RSTAB'],[1,'-','proj','Bruecke*',1],[2,'-','fo','Modelldaten'],[3,'+','f1','Knoten'],[3,'+','f2','Materialien'],[3,'+','f3','Querschnitte'],[3,'+','f4','Stabendgelenke'],[3,'.','f5','Stabexzentrizitäten'],[3,'.','f6','Stabteilungen'],[3,'+','f7','Stäbe'],[3,'-','f8','Knotenlager'],[4,'.','sup','1: 38,39,146,147; Z -23.875 °; JJJ NNN'],[4,'.','sup','2: 150,151; JJJ NNF'],[4,'.','sup','3: 152-155; JJJ NNN'],[3,'.','f9','Stabbettungen'],[3,'.','f10','Stabnichtlinearitäten'],[3,'-','f11','Stabsätze'],[4,'.','zug','1: Stabzug 1: Stäbe: 1-36'],[4,'.','zug','2: Stabzug 2: Stäbe: 91,171,172'],[4,'.','zug','3: Stabzug 3: Stäbe: 92,173,174'],[2,'-','fo','Lastfälle und Kombinationen'],[3,'+','lf','Lastfälle'],[3,'.','c1','Lastkombinationen'],[3,'+','c2','Ergebniskombinationen'],[3,'.','c3','Superkombinationen'],[2,'+','fc','Lasten'],[2,'.','fc','Ergebnisse'],[2,'.','fc','Ausdruckprotokolle'],[2,'+','fc','Hilfsobjekte'],[2,'-','fo','Zusatzmodule'],[3,'-','fo','Favoriten'],[4,'.','rsb','RSBEWEG - Generierung von Wanderlasten a',1],
S('','STAHL - Allgemeine Spannungsanalyse von Stäben'),S('EC','STAHL EC3 - Bemessung nach Eurocode 3'),S('AISC','STAHL AISC - Bemessung nach AISC (LRFD oder AS'),S('IS','STAHL IS - Bemessung nach IS'),S('SIA','STAHL SIA - Bemessung nach SIA'),S('BS','STAHL BS - Bemessung nach BS'),S('GB','STAHL GB - Bemessung nach GB'),S('CSA','STAHL CSA - Bemessung nach CSA'),S('AS','STAHL AS - Bemessung nach AS'),S('NTC','STAHL NTC-DF - Bemessung nach NTC-DF'),S('SP','STAHL SP - Bemessung nach SP'),S('PIFM','STAHL Plastisch - Plastische Bemessung nach TSV'),S('SANS','STAHL SANS - Bemessung nach SANS'),S('FD','STAHL Ermüdung Stäbe - Ermüdungsnachweis'),S('NBR','STAHL NBR - Bemessung nach NBR'),S('HK','STAHL HK - Bemessung nach HK'),S('EC9','ALUMINIUM - Bemessung nach Eurocode 9'),S('ADM','ALUMINIUM ADM - Bemessung von Stäben aus Al'),S('K','KAPPA - Biegeknicknachweis'),S('B','BGDK - Biegedrillknicknachweis'),S('F','FE-BGDK - Biegedrillknicknachweis mittels FEM'),S('E','EL-PL - Tragsicherheitsnachweis nach EL-PL'),S('C','C-ZU-T - Nachweis von grenz c/t'),S('X','FE-BEUL - Beulsicherheitsnachweis'),S('G','BETON - Stahlbetonbemessung von Stäben')];
const more=(i,l)=>{for(let j=i+1;j<tree.length;j++){if(tree[j][0]===l)return true;if(tree[j][0]<l)return false}return l===2||l===3};
const dotted=d=>P(d,'#888',1,'none','stroke-dasharray="1 1"');
const cell=s=>`<svg class="icn" viewBox="0 0 19 18" aria-hidden="true">${s}</svg>`;
document.getElementById('tree').innerHTML=tree.map(([l,x,ic,t,b],i)=>{
  let h='';
  for(let k=1;k<l;k++)h+=`<span class="tree-cell">${more(i,k)&&k>1?cell(dotted('M9.500 0v18')):''}</span>`;
  if(l){
    let s=dotted('M9.500 0v9')+dotted('M10 9.500h9')+(more(i,l)&&l>1?dotted('M9.500 9v9'):'');
    if(x!=='.')s+=R(5.500,5.500,8,8,'#fff','#8a93a3')+P('M7 9.500h5','#23407a')+(x==='+'?P('M9.500 7v5','#23407a'):'');
    h+=x==='.'?`<span class="tree-cell">${cell(s)}</span>`:`<button class="tree-cell" aria-label="${t}">${cell(s)}</button>`;
  }
  return `<li class="tree-row">${h}<span class="tree-icn">${svg(ic[0]==='@'?modIcn(ic.slice(1)):I[ic])}</span><span class="${b?'fw-bold':''}">${t}</span></li>`;
}).join('');

/* ---------- member table ---------- */
document.getElementById('gridcols').innerHTML=[45,114,42,42,66,78,66,66,42,42,48,42,72,72,72,30].map(w=>`<col style="width:${w}px">`).join('')+'<col>';
document.getElementById('letters').innerHTML='<th class="corner" rowspan="3">Stab<br>Nr.</th>'+[...'ABCDEFGHIJKLMNOP'].map(c=>`<th class="ltr${c==='A'?' cur':''}">${c}</th>`).join('');
const data=[[38,42,43,'-90.00',5,'Linear','1.811','45.6'],[39,47,48,'145.64',2,'','0.400','16.9'],[40,48,49,'-90.00',5,'Linear','1.637','41.2'],[41,53,54,'155.05',2,'','0.400','16.9'],[42,54,55,'-90.00',5,'Linear','1.490','37.5'],[43,59,60,'166.44',2,'','0.401','16.9']];
const ibeam='<svg width="9" height="13" class="ms-1"><path d="M1 1.500h7M4.500 2v9M1 11.500h7" stroke="#4a5da0" stroke-width="1.500" fill="none"/></svg>';
const sec=n=>`<div class="d-flex align-items-center"><span class="swatch" style="background:${n===5?'#ff0000':'#f5c400'}"></span>${ibeam}<span class="ms-auto me-3">${n}</span></div>`;
document.getElementById('rows').innerHTML=data.map((d,i)=>`<tr><th class="rowno${i?'':' cur'}">${d[0]}</th><td class="txt swc"><div class="d-flex align-items-center"><span class="swatch" style="background:#6699ff"></span><span class="${i?'bal':'focus-cell'}">Balkenstab</span></div></td><td>${d[1]}</td><td>${d[2]}</td><td class="txt"><u>W</u>inkel</td><td class="num">${d[3]}</td><td class="swc">${sec(2)}</td><td class="swc">${sec(d[4])}</td><td>0</td><td>0</td><td>0</td><td>0</td><td class="${d[5]?'':'calc'}">${d[5]?'<u>L</u>inear':''}</td><td class="calc num">${d[6]}</td><td class="calc num">${d[7]}</td><td class="calc"></td><td></td></tr>`).join('');

/* ---------- bridge model ---------- */
const top_=[[492,411],[580,417],[670,426],[723,433],[797,445],[875,459],[940,473],[1017,497],[1077,517],[1133,543],[1193,575],[1240,599],[1297,625],[1360,648],[1400,661],[1438,672],[1513,691],[1595,707],[1677,722],[1765,733],[1808,737]];
const mid=[[488,420],[577,424],[662,434],[743,445],[823,458],[897,474],[967,493],[1028,513],[1086,536],[1137,558],[1161,575],[1187,590],[1215,604],[1246,617],[1277,630],[1311,643],[1345,655],[1382,667],[1419,677],[1457,688],[1497,697],[1538,707],[1581,715],[1623,723],[1667,730],[1712,736],[1757,742],[1803,746]];
const bot=[[488,429],[577,436],[662,444],[743,455],[823,467],[897,484],[967,503],[1028,523],[1086,546],[1137,569],[1161,585],[1187,599],[1215,613],[1246,627],[1277,640],[1311,653],[1345,664],[1382,677],[1419,687],[1457,697],[1497,707],[1538,716],[1581,724],[1623,732],[1667,739],[1712,746],[1757,751],[1803,756]];
const L=a=>a.map(p=>p.join(' ')).join('L');
const poly=(a,f,o=1)=>`<path d="M${L(a)}z" fill="${f}" fill-opacity="${o}"/>`;
const dash='stroke-dasharray="2 1"';
const gray=(d)=>P(d,'#a6a6a6',1,'none',dash);
const cable=(a,b)=>P(`M${a[0]} ${a[1]}L${b[0]} ${b[1]}`,'#3c3ccc',.9);
const fin=(a,b,w=3)=>poly([[a[0]-.6,a[1]],[a[0]+.6,a[1]],[b[0]+w,b[1]],[b[0]-w,b[1]]],'#5a5ae6',.9);
const support=(x,y)=>`<g transform="translate(${x} ${y})">`+poly([[-2.5,12],[2.5,12],[2.5,20],[-2.5,20]],'#6cf56c')+poly([[-11,11.5],[-3,7],[3,7],[11,10.5],[3,15],[-3,14.500]],'#35e035')+C(0,4,4.2,'#3cf53c')+C(0,10,2.800,'#18d818')+'</g>';
let g='';
const t1=[763.5,212.5],t2=[1530.5,322];
const left=[[[546,412],[529,431],2],[[630,420],[616,438],2],[[712,420],[700,447],3],[[785.5,433],[780,460],3],[[855.5,446],[857.5,475],3],[[921.5,462],[928,491],4],[[982.5,480],[995,511],4],[[1039.5,500],[1055,533],4],[[1090,520.5],[1108,556],4]];
const right=[[[1203,555],[1188,573],3],[[1254,581],[1242,600],3],[[1311,604],[1302,626],3],[[1372.5,626],[1367,650],3],[[1438.5,646],[1439,672],3],[[1508.5,666],[1514,691],3],[[1582.5,681],[1595,708],3],[[1660,695],[1678,722],3],[[1739.5,705],[1763,733],3]];
g+=support(495,415)+support(1807,742)+support(487.5,424.500);
g+=poly([[1530,322],[1532,322],[1553,425],[1588,672],[1599,773],[1590,773],[1574,672],[1538,425]],'#8f8ff6',.95)+P('M1531 322L1545 425L1581 672L1595 773','#4040d8',1)+poly([[1531,322],[1533,322],[1553,425],[1588,672],[1599,773],[1594,773],[1581,672],[1546,425]],'#7474ec',.8);
right.forEach(([a,b,w])=>{g+=cable(t2,a)});
g+=fin(right[6][0],right[6][1]);
/* deck faces */
g+=`<defs><linearGradient id="df" gradientUnits="userSpaceOnUse" x1="1125" x2="1175" y1="0" y2="0"><stop stop-color="#e88714"/><stop offset="1" stop-color="#ffa94c"/></linearGradient></defs>`;
g+=poly([...mid,...[...bot].reverse()],'url(#df)',.97)+poly([...top_,...[...mid].reverse()],'#b76616');
mid.forEach((m,i)=>{
  if(!i||i===mid.length-1)return;
  const r=m[0]>1140,b=bot[i],dx=r?17:10,dy=r?-7:-6;
  g+=poly([[m[0],m[1]],[m[0]+dx-2,m[1]+2],[m[0]+dx-3,b[1]-3],[b[0],b[1]]],r?'#ff8a0a':'#f58a08',.9);
  g+=poly([[m[0],m[1]],[m[0]+dx,m[1]+dy],[m[0]+dx+2,m[1]+dy+6],[m[0]+dx-3,m[1]+3]],'#9c5408',.55);
  g+=P(`M${m[0]+dx-3} ${m[1]-2}h4`,'#5b3408',1.5);
  g+=gray(`M${b[0]} ${b[1]}L${m[0]} ${m[1]}L${m[0]+dx} ${m[1]+dy}`);
});
for(let i=3;i<9;i++){const a=mid[i],b=mid[i+1],x=(a[0]+b[0])/2,y=(a[1]+b[1])/2;g+=P(`M${x+8} ${y-2}h4`,'#6b3e0c',1.500)+gray(`M${x} ${y}l10 -6`)}
g+=gray('M'+L(top_))+gray('M'+L(mid))+gray('M'+L(bot))+poly([[1803,746],[1808,737],[1808,744],[1803,756]],'#ff8a0a');
[[1136,557],[1153,567],[1199,593],[1212,599]].forEach(p=>g+=C(p[0],p[1],2,'#7a3a1c'));
right.forEach(([a,b,w],i)=>{if(i!==6)g+=fin(a,b,w)});
left.forEach(([a,b,w])=>{g+=cable(t1,a)+fin(a,b,w)});
/* left pylon */
g+=poly([[761.5,212],[765.5,212],[755,300],[720.5,497],[703,575],[696,575],[706.5,497],[741.5,300]],'#6c6cf0',.97)+poly([[763,222],[765,222],[750,300],[716,497],[701,575],[698,575],[709,497],[745,300]],'#5656dc',.6);
g+=gray('M760 210L738 292L703 490L695 574M766 212L758 298L724 495L704 574M738 290L742 299L758 298M703 490L708 497L724 495M758 210h10v4');
g+=gray('M1526 322L1534 425L1569 672L1590 773M1534 322L1555 423L1591 669L1599 773M1534 425L1555 423M1569 672L1591 669M1526 321h9v3');
g+=poly([[1584,715],[1596,715],[1594,733],[1588,733]],'#d96a3c',.6);
[[461.5,479],[568.5,617.500]].forEach(p=>g+=cable(t1,p));
[[1725.5,620],[1832.5,677]].forEach(p=>g+=cable(t2,p));
[[461.5,479],[568.5,617],[699,575],[1725.5,619.500],[1832.5,677],[1595,773]].forEach(p=>g+=support(...p));
g+=support(1801.5,750)+C(763.5,212.500,3,'#3a3ab8')+C(1531,323,2.500,'#5a5ad8');
g+=P('M681 577.500l6-.5l-3-1q4-4 14-3','#22e022',1.300)+P('M1600 774h7q2-3 4-3h3','#22e022',1.300);
/* loads */
const N='#000080';
const arrow=(x1,y1,x2,y2)=>P(`M${x1} ${y1}L${x2} ${y2-6}`,N,2)+P(`M${x2-4} ${y2-6}h8l-4 7z`,'none',0,N);
g+=`<path d="M1135.500 500.500L1141 502L1212.500 542V551.500L1135.500 510z" fill="#9a9ad4" fill-opacity=".5" stroke="${N}" stroke-dasharray="3 1"/>`;
g+=arrow(1134,357,1135.5,508.500)+arrow(1155.500,377,1154.500,467)+arrow(1202,403,1200.500,493);
[[1147,507,514],[1172,522,529],[1198,536,543],[1212,543,550]].forEach(a=>g+=P(`M${a[0]} ${a[1]}V${a[2]-3}`,N,1.500)+P(`M${a[0]-3} ${a[2]-4}h6l-3 6z`,'none',0,N));
[[1141,502.500],[1160,513.500],[1185.500,528],[1206,539]].forEach(p=>g+=C(p[0],p[1],2,N));
g+=P('M1121 557Q1122 541 1138 540Q1151 541 1151.500 555',N,1)+P('M1118 555h6l-3 6z','none',0,N)+P('M1137 575Q1143 572 1146 568',N,1);
[[1142,361,'30.00'],[1164,381,'18.00'],[1210,407,'18.00'],[1135,496,'2.00'],[1153,507,'2.00'],[1179,521,'2.00'],[1199,532,'2.00'],[1128,534,'0.50']].forEach(([x,y,t])=>g+=`<text x="${x}" y="${y}">${t}</text>`);
document.getElementById('scene').innerHTML=g;
</script>
</body>
</html>
